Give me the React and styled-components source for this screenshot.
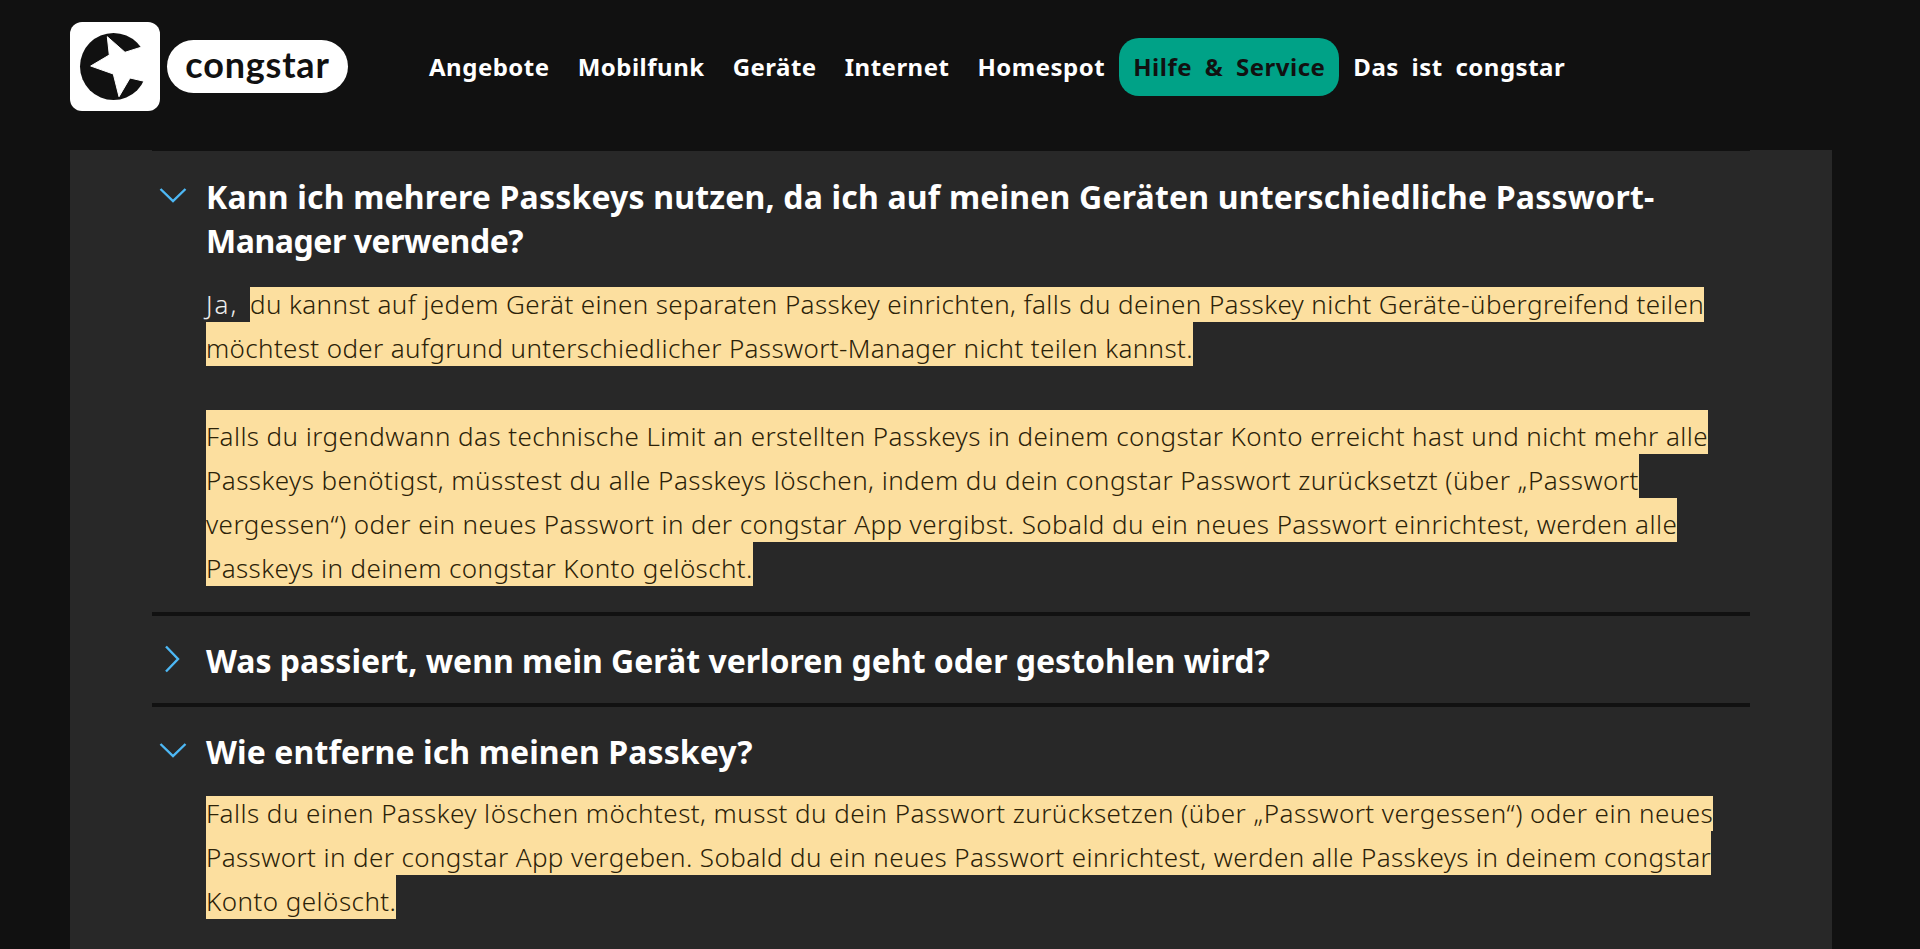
import styled, { createGlobalStyle } from "styled-components";

const GlobalStyle = createGlobalStyle`
  html, body {
    margin: 0;
    height: 100%;
    overflow: hidden;
    background: #111111;
    font-family: "Noto Sans", "Open Sans", sans-serif;
  }
`;

const Header = styled.header`
  display: flex;
  align-items: center;
  height: 150px;
  box-sizing: border-box;
  padding: 22px 0 39px 70px;
`;

const LogoMark = styled.svg`
  width: 90px;
  height: 89px;
  flex: none;
`;

const LogoPill = styled.div`
  display: flex;
  align-items: center;
  justify-content: center;
  width: 181px;
  height: 53px;
  margin-left: 7px;
  border-radius: 27px;
  background: #fff;
  color: #111;
  font-family: "Lato", sans-serif;
  font-size: 36px;
  font-weight: 700;
  letter-spacing: 0.8px;
  line-height: 1;
  padding-bottom: 5px;
  box-sizing: border-box;
`;

const Nav = styled.nav`
  display: flex;
  margin-left: 67px;
`;

const NavItem = styled.a`
  display: flex;
  align-items: center;
  height: 58px;
  padding: 0 14px;
  border-radius: 20px;
  font-size: 24px;
  font-weight: 700;
  letter-spacing: 0.5px;
  word-spacing: 6px;
  color: ${(p) => (p.$active ? "#111" : "#fff")};
  background: ${(p) => (p.$active ? "#00a287" : "transparent")};
`;

const Panel = styled.main`
  margin: 0 88px 0 70px;
  height: 799px;
  padding: 0 82px;
  background: #282828;
`;

const List = styled.div`
  border-top: 1px solid #111;
`;

const Item = styled.section`
  display: flex;
  padding: ${(p) => p.$pad};
  & + & {
    border-top: 4px solid #111;
  }
`;

const IconCol = styled.div`
  flex: none;
  width: 47px;
  padding: 6px 0 0 7px;
`;

const Chevron = styled.svg`
  display: block;
  width: 28px;
  height: 28px;
  fill: none;
  stroke: #4db8f5;
  stroke-width: 2.4;
`;

const Content = styled.div`
  flex: 1;
  min-width: 0;
`;

const Question = styled.h3`
  margin: 0;
  font-size: 32px;
  font-weight: 700;
  line-height: 44px;
  white-space: nowrap;
  color: #fff;
`;

const QuestionLine = styled.span`
  display: block;
  letter-spacing: ${(p) => p.$ls || "0.1px"};
`;

const Answer = styled.div`
  margin-top: ${(p) => p.$top};
`;

const Line = styled.div`
  display: flex;
  align-items: flex-end;
  height: 44px;
  white-space: pre;
  font-size: 26px;
  font-weight: 300;
  letter-spacing: ${(p) => p.$ls || "0.45px"};
  color: #eee;
`;

const Plain = styled.span`
  width: 44px;
  height: 35px;
  line-height: 35px;
  letter-spacing: 2px;
`;

const Mark = styled.mark`
  display: block;
  height: ${(p) => (p.$first ? "35px" : "44px")};
  padding-top: ${(p) => (p.$first ? "0" : "9px")};
  box-sizing: border-box;
  line-height: 35px;
  background: #fcdf9f;
  color: #2b2208;
`;

function ChevronDown() {
  return (
    <Chevron viewBox="0 0 28 28">
      <polyline points="1.5,8 14,20 26.5,8" />
    </Chevron>
  );
}

function ChevronRight() {
  return (
    <Chevron viewBox="0 0 28 28">
      <polyline points="7,1.5 19,14 7,26.5" />
    </Chevron>
  );
}

const navItems = [
  "Angebote",
  "Mobilfunk",
  "Geräte",
  "Internet",
  "Homespot",
  "Hilfe & Service",
  "Das ist congstar",
];

export default function App() {
  return (
    <>
      <GlobalStyle />
      <Header>
        <LogoMark viewBox="0 0 90 89">
          <rect width="90" height="89" rx="12" fill="#fff" />
          <circle cx="43.5" cy="44.5" r="33.5" fill="#111" />
          <path
            d="M20.7 44 L39.3 33 L37.3 14.7 L55 30.3 L72.7 24.7 L90 24.7 L90 59.7 L76 59.7 L60 56 L49 74.7 L43.3 52 Z"
            fill="#fff"
            stroke="#fff"
            strokeWidth="1"
            strokeLinejoin="round"
          />
        </LogoMark>
        <LogoPill>congstar</LogoPill>
        <Nav>
          {navItems.map((label) => (
            <NavItem key={label} $active={label === "Hilfe & Service"}>
              {label}
            </NavItem>
          ))}
        </Nav>
      </Header>
      <Panel>
        <List>
          <Item $pad="24px 0 26px">
            <IconCol>
              <ChevronDown />
            </IconCol>
            <Content>
              <Question>
                <QuestionLine $ls="0.18px">
                  Kann ich mehrere Passkeys nutzen, da ich auf meinen Geräten unterschiedliche Passwort-
                </QuestionLine>
                <QuestionLine $ls="-0.45px">Manager verwende?</QuestionLine>
              </Question>
              <Answer $top="15px">
                <Line $ls="0.4px">
                  <Plain>Ja, </Plain>
                  <Mark $first>du kannst auf jedem Gerät einen separaten Passkey einrichten, falls du deinen Passkey nicht Geräte-übergreifend teilen</Mark>
                </Line>
                <Line $ls="0.36px">
                  <Mark>möchtest oder aufgrund unterschiedlicher Passwort-Manager nicht teilen kannst.</Mark>
                </Line>
                <Line />
                <Line $ls="0.41px">
                  <Mark>Falls du irgendwann das technische Limit an erstellten Passkeys in deinem congstar Konto erreicht hast und nicht mehr alle</Mark>
                </Line>
                <Line>
                  <Mark>Passkeys benötigst, müsstest du alle Passkeys löschen, indem du dein congstar Passwort zurücksetzt (über „Passwort</Mark>
                </Line>
                <Line $ls="0.42px">
                  <Mark>vergessen“) oder ein neues Passwort in der congstar App vergibst. Sobald du ein neues Passwort einrichtest, werden alle</Mark>
                </Line>
                <Line $ls="0.39px">
                  <Mark>Passkeys in deinem congstar Konto gelöscht.</Mark>
                </Line>
              </Answer>
            </Content>
          </Item>
          <Item $pad="23px 0 20px">
            <IconCol>
              <ChevronRight />
            </IconCol>
            <Content>
              <Question>
                <QuestionLine $ls="0px">Was passiert, wenn mein Gerät verloren geht oder gestohlen wird?</QuestionLine>
              </Question>
            </Content>
          </Item>
          <Item $pad="23px 0 0">
            <IconCol>
              <ChevronDown />
            </IconCol>
            <Content>
              <Question>
                <QuestionLine>Wie entferne ich meinen Passkey?</QuestionLine>
              </Question>
              <Answer $top="13px">
                <Line>
                  <Mark $first>Falls du einen Passkey löschen möchtest, musst du dein Passwort zurücksetzen (über „Passwort vergessen“) oder ein neues</Mark>
                </Line>
                <Line $ls="0.39px">
                  <Mark>Passwort in der congstar App vergeben. Sobald du ein neues Passwort einrichtest, werden alle Passkeys in deinem congstar</Mark>
                </Line>
                <Line>
                  <Mark>Konto gelöscht.</Mark>
                </Line>
              </Answer>
            </Content>
          </Item>
        </List>
      </Panel>
    </>
  );
}
